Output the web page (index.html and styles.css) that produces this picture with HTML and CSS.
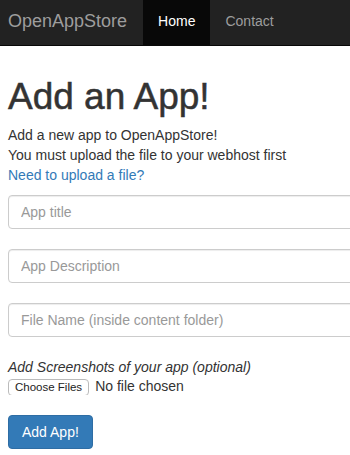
FILE: index.html
```html
<!DOCTYPE html>
<html lang="en">
<head>
  <meta charset="UTF-8">
  <title>OpenAppStore - Add an App</title>
  <link rel="stylesheet" href="styles.css">
</head>
<body>

  <!-- Barra de navegacion -->
  <nav class="navbar">
    <a class="brand" href="#">OpenAppStore</a>
    <ul class="nav">
      <li class="active"><a href="#">Home</a></li>
      <li><a href="#">Contact</a></li>
    </ul>
  </nav>

  <div class="contenido">
    <h1>Add an App!</h1>
    <p class="intro">
      Add a new app to OpenAppStore!<br>
      You must upload the file to your webhost first<br>
      <a href="#">Need to upload a file?</a>
    </p>

    <form>
      <input class="campo" type="text" placeholder="App title">
      <input class="campo" type="text" placeholder="App Description">
      <input class="campo" type="text" placeholder="File Name (inside content folder)">

      <label class="etiqueta" for="capturas">Add Screenshots of your app (optional)</label>
      <input id="capturas" class="archivo" type="file" multiple>

      <button class="boton" type="submit">Add App!</button>
    </form>
  </div>

</body>
</html>
```

FILE: styles.css
```css
body {
  margin: 0;
  font-family: "Liberation Sans", Arial, Helvetica, sans-serif;
  font-size: 14px;
  line-height: 20px;
  color: #333;
  background: #fff;
  overflow: hidden;
}

a {
  color: #337ab7;
  text-decoration: none;
}

.navbar {
  display: flex;
  height: 45px;
  background: #222;
  border-bottom: 1px solid #080808;
}

.brand {
  padding: 0 16px 0 8px;
  font-size: 18px;
  line-height: 43px;
  color: #9d9d9d;
}

.nav {
  display: flex;
  margin: 0;
  padding: 0;
  list-style: none;
}

.nav a {
  display: block;
  height: 45px;
  padding: 0 15px;
  line-height: 43px;
  color: #9d9d9d;
}

.nav .active a {
  color: #fff;
  background: #080808;
}

.contenido {
  padding-left: 8px;
  overflow: hidden;
}

h1 {
  margin: 31px 0 0;
  font-size: 37px;
  line-height: 40px;
  font-weight: normal;
  -webkit-text-stroke: 0.5px #333;
}

.intro {
  margin: 8px 0 10px;
}

.campo {
  display: block;
  box-sizing: border-box;
  width: 360px;
  height: 34px;
  margin-bottom: 20px;
  padding: 6px 12px;
  font-family: inherit;
  font-size: 14px;
  line-height: 20px;
  color: #555;
  border: 1px solid #ccc;
  border-radius: 4px;
  box-shadow: inset 0 1px 1px rgba(0,0,0,0.075);
}

.campo::placeholder {
  color: #999;
}

.etiqueta {
  display: block;
  font-style: italic;
}

.archivo {
  display: block;
  height: 18px;
  margin: 0 0 20px;
  padding: 0;
  font-family: inherit;
  font-size: 14px;
  line-height: 18px;
  color: #333;
}

.archivo::file-selector-button {
  height: 17px;
  margin: 0 6px 0 0;
  padding: 0 6px;
  font-family: inherit;
  font-size: 11.5px;
  color: #222;
  background: #fff;
  border: 1px solid #bbb;
  border-radius: 4px;
}

.boton {
  display: block;
  height: 34px;
  padding: 6px 13px;
  font-family: inherit;
  font-size: 14px;
  line-height: 20px;
  color: #fff;
  background-color: #337ab7;
  border: 1px solid #2e6da4;
  border-radius: 4px;
  cursor: pointer;
}
```
